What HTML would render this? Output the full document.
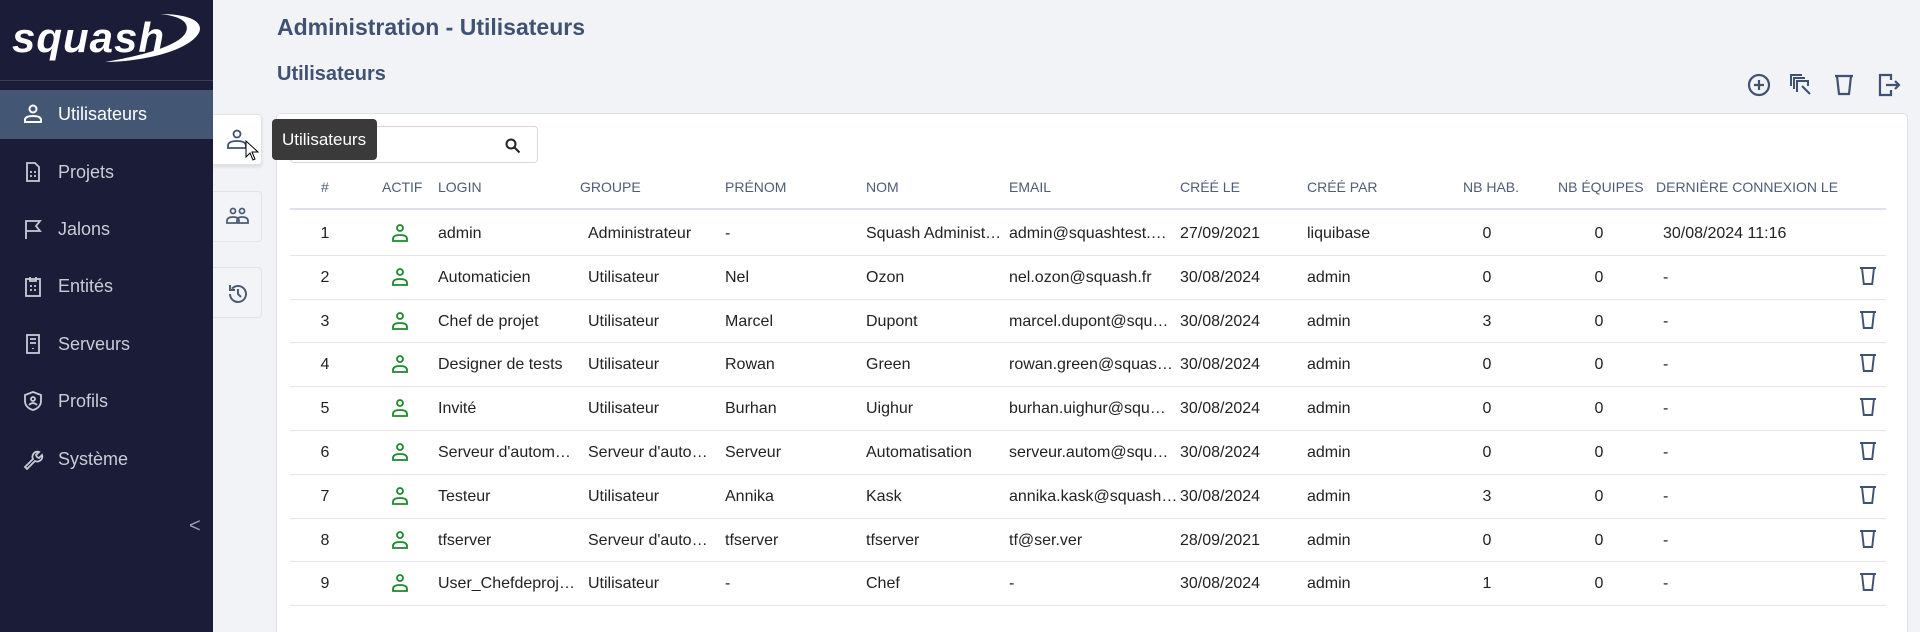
<!DOCTYPE html>
<html style="width:1920px;height:632px;overflow:hidden"><head><meta charset="utf-8"><style>
*{margin:0;padding:0;box-sizing:border-box}
body{width:1920px;height:632px;overflow:hidden;background:#f2f3f7;font-family:"Liberation Sans",sans-serif;position:relative}
.sb{position:absolute;left:0;top:0;width:213px;height:632px;background:#1b1d38}
.logo{position:absolute;left:12px;top:14px;color:#fff;font-style:italic;font-weight:bold;font-size:42px;letter-spacing:1px}
.div{position:absolute;left:0;top:80px;width:213px;height:1px;background:#3a3e5c}
.nav{position:absolute;left:0;width:213px;height:49px;color:#c9ccd6;font-size:18px;line-height:49px;padding-left:58px}
.nav.act{background:#435775;color:#fff}
.nav svg{position:absolute;left:22px;top:13px}
.t1{position:absolute;left:277px;top:14px;font-size:23px;color:#3f5272;font-weight:bold}
.t2{position:absolute;left:277px;top:63px;font-size:20px;color:#3f5272;font-weight:bold}
.ti{position:absolute;top:72px}
.tab{position:absolute;left:213px;width:49px;height:51px;background:#f2f4f7;border:1px solid #e0e4ea;border-left:none;border-radius:0 4px 4px 0}
.card{position:absolute;left:276px;top:113px;width:1632px;height:519px;background:#fff;border:1px solid #dde2e8;border-bottom:none;border-radius:5px 5px 0 0}
.search{position:absolute;left:290px;top:126px;width:248px;height:37px;border:1px solid #d5d9df;border-radius:4px;background:#fff}
.tip{position:absolute;left:272px;top:119px;width:105px;height:41px;background:#3a3a3a;color:#fff;font-size:17px;line-height:41px;padding-left:10px;border-radius:4px}
.th{position:absolute;top:179px;font-size:14px;color:#4e5d74;white-space:nowrap}
.hl{position:absolute;left:290px;width:1596px;height:2px;background:#dde3ea}
.rl{position:absolute;left:290px;width:1596px;height:1px;background:#e3e7ec}
.c{position:absolute;font-size:16px;color:#222;white-space:nowrap;overflow:hidden}
</style></head><body>
<div class="sb">
<div class="logo">squash</div>
<svg style="position:absolute;left:100px;top:12px" width="105" height="52"><path d="M60 2 C100 2 110 16 90 30 C70 44 30 50 5 50 C40 44 80 34 86 20 C90 10 80 4 60 2Z" fill="#fff"/></svg>
<div class="div"></div>
<div class="nav act" style="top:90px"><svg width="22" height="22" viewBox="0 0 22 22" fill="none" stroke="#fff" stroke-width="2"><circle cx="11" cy="6" r="3.5"/><path d="M3 19 V17 Q3 13 11 13 Q19 13 19 17 V19 Z"/></svg>Utilisateurs</div>
<div class="nav" style="top:148px"><svg width="22" height="22" viewBox="0 0 22 22" fill="none" stroke="#c9ccd6" stroke-width="1.8"><path d="M5 2h8l4 4v14H5z"/><path d="M8 11h2M12 11h2M8 15h2M12 15h2"/></svg>Projets</div>
<div class="nav" style="top:205px"><svg width="22" height="22" viewBox="0 0 22 22" fill="none" stroke="#c9ccd6" stroke-width="1.8"><path d="M4 21V3h14l-4 5 4 5H4"/></svg>Jalons</div>
<div class="nav" style="top:262px"><svg width="22" height="22" viewBox="0 0 22 22" fill="none" stroke="#c9ccd6" stroke-width="1.8"><rect x="4" y="4" width="14" height="17"/><path d="M8 2v4h6V2M8 11h2M12 11h2M8 15h2M12 15h2"/></svg>Entités</div>
<div class="nav" style="top:320px"><svg width="22" height="22" viewBox="0 0 22 22" fill="none" stroke="#c9ccd6" stroke-width="1.8"><rect x="5" y="2" width="12" height="18"/><path d="M8 6h6M8 10h6M11 15v1"/></svg>Serveurs</div>
<div class="nav" style="top:377px"><svg width="22" height="22" viewBox="0 0 22 22" fill="none" stroke="#c9ccd6" stroke-width="1.8"><path d="M11 2l8 3v6c0 5-4 8-8 9-4-1-8-4-8-9V5z"/><circle cx="11" cy="9" r="2"/><path d="M7 15q4-4 8 0"/></svg>Profils</div>
<div class="nav" style="top:435px"><svg width="22" height="22" viewBox="0 0 22 22" fill="none" stroke="#c9ccd6" stroke-width="1.8"><path d="M3 19l8-8a5 5 0 0 1 6-7l-3 3 1 2 2 1 3-3a5 5 0 0 1-7 6l-8 8z"/></svg>Système</div>
<div style="position:absolute;left:189px;top:515px;color:#9aa0b5;font-size:20px">&lt;</div>
</div>
<div class="t1">Administration - Utilisateurs</div>
<div class="t2">Utilisateurs</div>
<svg class="ti" style="left:1746px" width="26" height="26" viewBox="0 0 26 26" fill="none" stroke="#3f5272" stroke-width="2.2"><circle cx="13" cy="13" r="10"/><path d="M13 8v10M8 13h10"/></svg>
<svg class="ti" style="left:1788px" width="26" height="26" viewBox="0 0 26 26" fill="none" stroke="#3f5272" stroke-width="2"><path d="M3 14V3h11M6 17V6h11M9 20V9h11v5"/><path d="M14 14l8 8"/></svg>
<svg class="ti" style="left:1831px" width="26" height="26" viewBox="0 0 26 26" fill="none" stroke="#3f5272" stroke-width="2.2"><path d="M4 4h18M6 4l2 18h10l2-18"/></svg>
<svg class="ti" style="left:1876px" width="26" height="26" viewBox="0 0 26 26" fill="none" stroke="#3f5272" stroke-width="2.2"><path d="M15 8V3H4v20h11v-5M10 13h13M19 9l4 4-4 4"/></svg>
<div class="tab" style="top:114px;background:#fff;box-shadow:0 2px 3px rgba(0,0,0,.1)"><svg style="position:absolute;left:13px;top:14px" width="24" height="22" viewBox="0 0 24 22" fill="none" stroke="#3f5272" stroke-width="1.8"><circle cx="11" cy="5" r="3.5"/><path d="M2 19V17Q2 12 11 12Q20 12 20 17V19Z"/></svg></div>
<div class="tab" style="top:191px"><svg style="position:absolute;left:12px;top:15px" width="26" height="20" viewBox="0 0 26 20" fill="none" stroke="#4e5d74" stroke-width="1.8"><circle cx="8" cy="4" r="2.5"/><circle cx="17" cy="4" r="2.5"/><path d="M2 16V14Q2 10 8 10Q14 10 14 14V16ZM12 16V14Q12 10 17 10Q23 10 23 14V16Z"/></svg></div>
<div class="tab" style="top:267px"><svg style="position:absolute;left:13px;top:14px" width="24" height="24" viewBox="0 0 24 24" fill="none" stroke="#4e5d74" stroke-width="2"><path d="M4 12a8 8 0 1 0 2-5.3M4 3v5h5"/><path d="M12 7v5l3 3"/></svg></div>
<div class="card"></div>
<div class="search"><svg style="position:absolute;left:214px;top:11px" width="16" height="16" viewBox="0 0 16 16" fill="none" stroke="#222" stroke-width="2"><circle cx="6" cy="6" r="4.5"/><path d="M9.5 9.5l5 5"/></svg></div>
<div class="tip">Utilisateurs</div>
<svg style="position:absolute;left:244px;top:140px" width="18" height="22" viewBox="0 0 18 22"><path d="M2 1v16l4-4 3 7 2-1-3-7h6z" fill="#fff" stroke="#000"/></svg>
<div class="th" style="left:321px">#</div><div class="th" style="left:382px">ACTIF</div><div class="th" style="left:438px">LOGIN</div><div class="th" style="left:580px">GROUPE</div><div class="th" style="left:725px">PRÉNOM</div><div class="th" style="left:866px">NOM</div><div class="th" style="left:1009px">EMAIL</div><div class="th" style="left:1180px">CRÉÉ LE</div><div class="th" style="left:1307px">CRÉÉ PAR</div><div class="th" style="left:1463px">NB HAB.</div><div class="th" style="left:1558px">NB ÉQUIPES</div><div class="th" style="left:1656px">DERNIÈRE CONNEXION LE</div>
<div class="hl" style="top:208px"></div>
<div id="rows"></div>
<script>
var d=[["admin","Administrateur","-","Squash Administ…","admin@squashtest.…","27/09/2021","liquibase","0","0","30/08/2024 11:16",0],
["Automaticien","Utilisateur","Nel","Ozon","nel.ozon@squash.fr","30/08/2024","admin","0","0","-",1],
["Chef de projet","Utilisateur","Marcel","Dupont","marcel.dupont@squ…","30/08/2024","admin","3","0","-",1],
["Designer de tests","Utilisateur","Rowan","Green","rowan.green@squas…","30/08/2024","admin","0","0","-",1],
["Invité","Utilisateur","Burhan","Uighur","burhan.uighur@squ…","30/08/2024","admin","0","0","-",1],
["Serveur d'autom…","Serveur d'auto…","Serveur","Automatisation","serveur.autom@squ…","30/08/2024","admin","0","0","-",1],
["Testeur","Utilisateur","Annika","Kask","annika.kask@squash…","30/08/2024","admin","3","0","-",1],
["tfserver","Serveur d'auto…","tfserver","tfserver","tf@ser.ver","28/09/2021","admin","0","0","-",1],
["User_Chefdeproj…","Utilisateur","-","Chef","-","30/08/2024","admin","1","0","-",1]];
var h="";
d.forEach(function(r,i){var y=211+i*43.8;var t=y+14;
function c(x,w,s,al){h+='<div class="c" style="left:'+x+'px;top:'+t+'px;width:'+w+'px;text-align:'+(al||'left')+'">'+s+'</div>';}
c(300,50,i+1,'center');
h+='<svg style="position:absolute;left:390px;top:'+(y+12)+'px" width="20" height="20" viewBox="0 0 20 20" fill="none" stroke="#1a8a2a" stroke-width="1.8"><circle cx="10" cy="5" r="3"/><path d="M3 18V16Q3 12 10 12Q17 12 17 16V18Z"/></svg>';
c(438,140,r[0]);c(588,135,r[1]);c(725,135,r[2]);c(866,140,r[3]);c(1009,170,r[4]);c(1180,120,r[5]);c(1307,120,r[6]);
c(1467,40,r[7],'center');c(1579,40,r[8],'center');c(1663,200,r[9]);
if(r[10])h+='<svg style="position:absolute;left:1857px;top:'+(y+10)+'px" width="22" height="22" viewBox="0 0 22 22" fill="none" stroke="#3f5272" stroke-width="1.9"><path d="M3 3h16M5 3l1.8 16h8.4L17 3"/></svg>';
h+='<div class="rl" style="top:'+(y+43.8)+'px"></div>';});
document.getElementById("rows").innerHTML=h;
</script>
</body></html>
